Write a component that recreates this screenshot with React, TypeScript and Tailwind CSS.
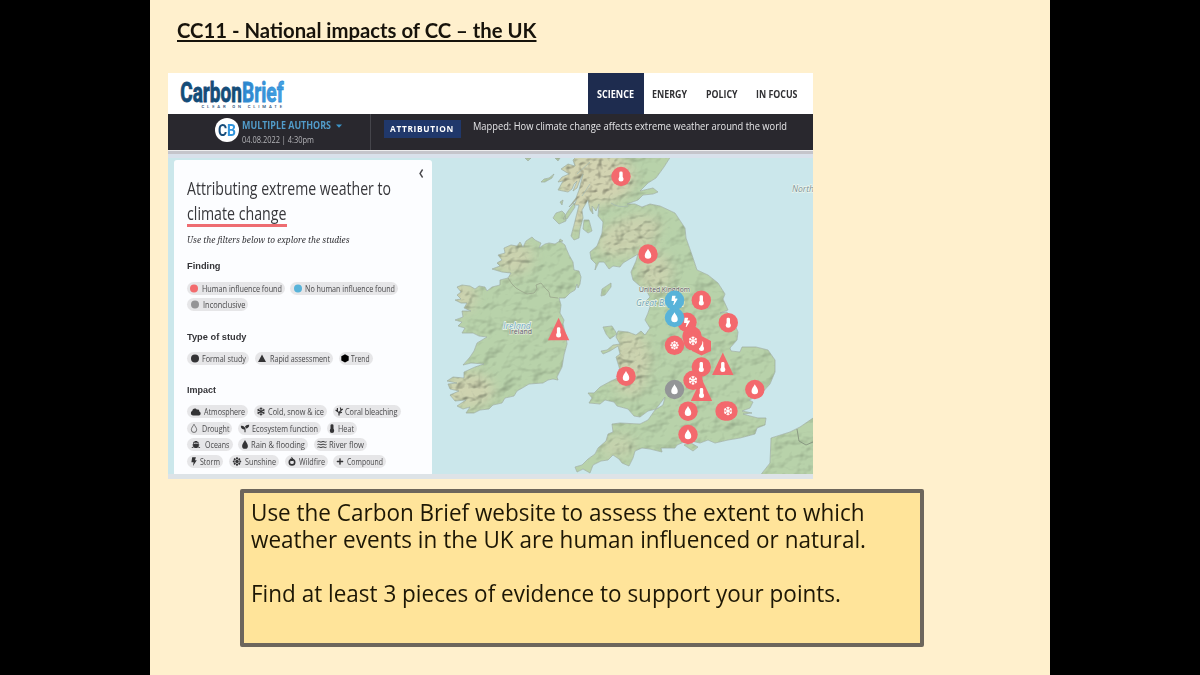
import { ReactNode, useLayoutEffect, useRef } from 'react';
import { FaBolt, FaCloud, FaFire, FaPlus, FaSeedling, FaShip, FaSnowflake, FaSun } from 'react-icons/fa';

interface FitProps {
  width: number;
  className?: string;
  children: ReactNode;
}

// Condenses a single line of text to a set width
function Fit({ width, className = '', children }: FitProps) {
  const ref = useRef<HTMLSpanElement>(null);

  useLayoutEffect(() => {
    const el = ref.current;
    if (!el) return;
    el.style.transform = 'none';
    const natural = el.getBoundingClientRect().width;
    el.style.transform = `scaleX(${width / natural})`;
  }, [width]);

  return (
    <span className="flex shrink-0 whitespace-nowrap" style={{ width }}>
      <span ref={ref} className={`block shrink-0 origin-left ${className}`}>
        {children}
      </span>
    </span>
  );
}

type IconName =
  | 'red' | 'blue' | 'grey' | 'circle' | 'triangle' | 'hexagon'
  | 'cloud' | 'snow' | 'coral' | 'drought' | 'plant' | 'heat'
  | 'ship' | 'drop' | 'river' | 'bolt' | 'sun' | 'fire' | 'plus';

const DROP = 'M0-4.6C1-2.4 2.9-.8 2.9 1.4A2.9 2.9 0 0 1-2.9 1.4C-2.9-.8-1-2.4 0-4.6Z';

function PillIcon({ name }: { name: IconName }) {
  const dots: Partial<Record<IconName, string>> = { red: '#f26b6d', blue: '#58b3d9', grey: '#949496', circle: '#333335' };
  return (
    <svg className="h-[11px] w-[12px] shrink-0 text-[#333335]" viewBox="-6 -5.5 12 11">
      {dots[name] && <circle r="4" fill={dots[name]} />}
      {name === 'triangle' && <path d="M0-4L4 3.6H-4Z" fill="currentColor" />}
      {name === 'hexagon' && <path d="M0-4.2L3.7-2.2V2L0 4L-3.7 2V-2.2Z" fill="#000" />}
      {name === 'cloud' && <FaCloud x={-5.2} y={-4.6} size={10} />}
      {name === 'snow' && <FaSnowflake x={-4.2} y={-4.2} size={8.4} />}
      {name === 'coral' && (
        <path d="M0 4V1L-3.4-1.5M-1.6 0V-3.4M0 1.2L2-1L1.4-4M1.6-1L3.8-2.4M0 1.8L3 .8" stroke="currentColor" strokeWidth="1.2" fill="none" />
      )}
      {name === 'drought' && <path d={DROP} stroke="currentColor" strokeWidth=".7" fill="none" transform="scale(.92)" />}
      {name === 'plant' && <FaSeedling x={-4.4} y={-4.4} size={8.8} />}
      {name === 'heat' && (
        <g fill="currentColor">
          <rect x="-1.5" y="-4.2" width="3" height="7" rx="1.3" />
          <circle cy="2.2" r="2.2" />
        </g>
      )}
      {name === 'ship' && <FaShip x={-4.5} y={-4.4} size={8.8} />}
      {name === 'drop' && <path d={DROP} fill="currentColor" />}
      {name === 'river' && (
        <path d="M-4.5-2.7Q-3.4-3.4-2.2-2.7T0-2.7T2.2-2.7T4.5-2.7M-4.5 0Q-3.4-.7-2.2 0T0 0T2.2 0T4.5 0M-4.5 2.7Q-3.4 2-2.2 2.7T0 2.7T2.2 2.7T4.5 2.7" stroke="currentColor" strokeWidth="1" fill="none" />
      )}
      {name === 'bolt' && <path d="M-1.8-4.2H1.9L1-1.2H2.8L-1 4.5L-.4.8H-2.6Z" fill="currentColor" />}
      {name === 'sun' && <SunGlyph color="#333335" hole="#e6e6e8" />}
      {name === 'fire' && (
        <g>
          <circle cy=".7" r="2.7" fill="none" stroke="currentColor" strokeWidth="1.6" />
          <FaFire x={-2.5} y={-4.7} size={4.5} />
        </g>
      )}
      {name === 'plus' && <FaPlus x={-3.8} y={-3.8} size={7.6} />}
    </svg>
  );
}

function SunGlyph({ color, hole }: { color: string; hole: string }) {
  return (
    <g>
      {[0, 45, 90, 135].map((angle) => (
        <rect key={angle} x="-1" y="-4.2" width="2" height="8.4" rx=".8" fill={color} transform={`rotate(${angle})`} />
      ))}
      <circle r="2.1" fill="none" stroke={hole} strokeWidth=".7" />
    </g>
  );
}

interface PillData {
  label: string;
  icon: IconName;
  width: number;
  text: number;
}

const findings: PillData[][] = [
  [
    { label: 'Human influence found', icon: 'red', width: 97.5, text: 80 },
    { label: 'No human influence found', icon: 'blue', width: 108, text: 90 },
  ],
  [{ label: 'Inconclusive', icon: 'grey', width: 61, text: 42.5 }],
];

const studies: PillData[][] = [
  [
    { label: 'Formal study', icon: 'circle', width: 62, text: 44 },
    { label: 'Rapid assessment', icon: 'triangle', width: 78, text: 60 },
    { label: 'Trend', icon: 'hexagon', width: 34, text: 18.5 },
  ],
];

const impacts: PillData[][] = [
  [
    { label: 'Atmosphere', icon: 'cloud', width: 61, text: 41 },
    { label: 'Cold, snow & ice', icon: 'snow', width: 73, text: 56 },
    { label: 'Coral bleaching', icon: 'coral', width: 68, text: 52.5 },
  ],
  [
    { label: 'Drought', icon: 'drought', width: 45, text: 27.5 },
    { label: 'Ecosystem function', icon: 'plant', width: 83, text: 66 },
    { label: 'Heat', icon: 'heat', width: 30, text: 16 },
  ],
  [
    { label: 'Oceans', icon: 'ship', width: 45.5, text: 24.5 },
    { label: 'Rain & flooding', icon: 'drop', width: 70, text: 54 },
    { label: 'River flow', icon: 'river', width: 53, text: 35 },
  ],
  [
    { label: 'Storm', icon: 'bolt', width: 36, text: 20 },
    { label: 'Sunshine', icon: 'sun', width: 50, text: 31 },
    { label: 'Wildfire', icon: 'fire', width: 43, text: 26 },
    { label: 'Compound', icon: 'plus', width: 53, text: 36 },
  ],
];

function PillRows({ rows }: { rows: PillData[][] }) {
  return (
    <div className="flex flex-col gap-[3.7px]">
      {rows.map((row, index) => (
        <div key={index} className="flex gap-[5.8px]">
          {row.map((pill) => (
            <div key={pill.label} className="flex h-[13px] shrink-0 items-center rounded-full bg-[#e6e6e8] pr-[3px]" style={{ width: pill.width }}>
              <div className="flex min-w-0 flex-1 justify-center">
                <PillIcon name={pill.icon} />
              </div>
              <Fit width={pill.text} className="font-['Open_Sans'] text-[8.5px] leading-[13px] text-[#48484a]">
                {pill.label}
              </Fit>
            </div>
          ))}
        </div>
      ))}
    </div>
  );
}

interface Marker {
  x: number;
  y: number;
  glyph?: 'heat' | 'drop' | 'bolt' | 'snow' | 'sun';
  shape?: 'circle' | 'triangle' | 'hexagon';
  color?: string;
}

const markers: Marker[] = [
  { x: 621, y: 176.5, glyph: 'heat' },
  { x: 648, y: 254, glyph: 'drop' },
  { x: 701.3, y: 300.3, glyph: 'heat' },
  { x: 687, y: 322.3, glyph: 'bolt' },
  { x: 674.5, y: 317.5, glyph: 'drop', color: '#58b3d9' },
  { x: 674.5, y: 300.3, glyph: 'bolt', color: '#58b3d9' },
  { x: 728.3, y: 322.7, glyph: 'heat' },
  { x: 674.5, y: 345.3, glyph: 'sun' },
  { x: 701.5, y: 346, glyph: 'heat', shape: 'hexagon' },
  { x: 692, y: 336 },
  { x: 693, y: 340.8, glyph: 'snow' },
  { x: 701.3, y: 367, glyph: 'heat' },
  { x: 722.8, y: 367, glyph: 'heat', shape: 'triangle' },
  { x: 701.5, y: 393, glyph: 'heat', shape: 'triangle' },
  { x: 693, y: 380.3, glyph: 'snow' },
  { x: 626, y: 376.2, glyph: 'drop' },
  { x: 674.5, y: 389.5, glyph: 'drop', color: '#939597' },
  { x: 754.8, y: 389.5, glyph: 'drop' },
  { x: 688, y: 411.2, glyph: 'drop' },
  { x: 725, y: 411 },
  { x: 728, y: 411, glyph: 'snow' },
  { x: 688, y: 434.5, glyph: 'drop' },
  { x: 558.6, y: 332.3, glyph: 'heat', shape: 'triangle' },
];

function MapMarker({ x, y, glyph, shape = 'circle', color = '#f3696d' }: Marker) {
  return (
    <g transform={`translate(${x} ${y})`} color="#fff">
      {shape === 'circle' && <circle r="9.7" fill={color} />}
      {shape === 'triangle' && <path d="M0-14.5L10.7 8H-10.7Z" fill={color} />}
      {shape === 'hexagon' && <path d="M0-10L9.5-5V5L0 9.5L-9.5 5V-5Z" fill={color} />}
      {glyph === 'heat' && (
        <g fill="#fff">
          <rect x="-1.7" y="-5" width="3.4" height="8.5" rx="1.4" />
          <circle cy="2.6" r="2.5" />
        </g>
      )}
      {glyph === 'drop' && <path d={DROP} fill="#fff" transform="scale(1.12)" />}
      {glyph === 'bolt' && <FaBolt x={-4.8} y={-4.8} size={9.6} />}
      {glyph === 'snow' && <FaSnowflake x={-4.6} y={-4.6} size={9.2} />}
      {glyph === 'sun' && <SunGlyph color="#fff" hole="#f3696d" />}
    </g>
  );
}

const IRELAND =
  'M532 237L535 240L541 243L539 248L545 244L549 243L555 244L560 241L565 245L566 248L569 255L573 262L574 270L579 271L581 277L580 284L578 288L577 284L575 290L570 293L565 298L559 298L561 305L560 313L564 320L563 324L566 336L567 344L564 355L562 367L557 377L558 380L553 379L548 380L543 383L529 384L524 387L517 391L514 396L505 398L502 403L493 405L489 409L480 410L474 413L466 413L470 407L463 409L457 406L466 400L455 401L450 395L459 391L450 389L448 384L457 383L447 381L453 377L464 378L464 372L475 367L484 364L471 363L463 365L470 357L474 351L477 343L487 337L479 336L473 333L462 333L465 328L458 326L462 322L455 320L463 317L462 311L471 311L464 308L467 303L461 303L455 300L461 299L457 295L461 292L457 287L462 285L470 286L475 289L479 286L485 287L487 291L492 287L500 285L500 280L508 278L511 273L502 272L492 269L500 266L497 263L502 260L498 255L505 253L504 248L511 245L517 246L520 242L523 247L526 241Z';

const BRITAIN =
  'M577 156L573 160L575 166L568 164L561 169L569 174L562 177L558 182L563 181L558 190L568 192L572 189L574 184L577 181L573 191L577 188L580 180L583 174L579 190L576 198L569 207L577 199L574 205L579 205L577 213L574 225L571 236L574 240L579 238L580 229L583 218L582 210L585 205L588 200L590 210L593 214L592 206L596 211L599 204L598 216L603 222L602 233L597 246L590 252L591 259L596 264L595 270L599 262L604 262L609 269L613 266L620 267L623 263L633 257L638 254L636 261L631 272L633 280L640 286L646 290L650 297L646 301L650 307L648 313L645 320L650 328L645 335L641 331L636 335L628 332L618 331L616 337L620 344L613 345L607 350L601 351L603 354L610 351L618 346L620 354L616 357L620 370L620 377L611 381L600 387L594 393L588 393L592 398L589 403L600 404L605 400L614 402L617 406L628 409L634 416L640 417L648 411L656 409L665 397L663 405L655 410L648 420L640 424L620 423L612 424L613 432L608 434L606 441L598 448L595 454L588 459L582 465L575 467L577 472L583 469L590 473L593 465L601 461L608 460L613 455L619 459L622 463L629 466L633 458L635 451L642 448L650 449L662 452L661 448L675 448L677 445L684 442L691 441L700 443L708 440L715 443L728 440L740 438L755 434L757 428L765 425L766 418L758 418L750 416L743 414L752 413L742 411L750 408L753 402L749 400L760 395L770 384L775 372L775 360L768 350L756 347L742 347L740 352L731 351L730 348L737 340L738 332L735 325L727 312L720 313L728 310L723 299L725 294L718 283L708 275L697 270L692 255L686 238L685 228L675 213L660 206L650 204L642 207L635 204L627 204L638 200L643 195L653 194L658 192L653 188L640 191L648 183L656 178L664 167L671 156Z';

const ISLANDS = [
  'M601 296L602 289L611 283L611 287L605 295Z',
  'M584 220L589 220L592 231L588 233L583 229Z',
  'M556 213L562 211L565 214L566 221L559 224L553 218Z',
  'M563 219L568 211L574 203L575 207L567 219Z',
  'M541 182L544 179L549 178L554 174L552 178L545 182Z',
  'M560 202L563 200L562 205Z',
  'M525 158H531L528 161Z',
  'M603 327L612 326L617 334L610 339L606 334Z',
  'M684 445L691 443L698 447L693 451Z',
  'M560 239L563 241L559 242Z',
  'M555 158H560L558 161Z',
];

function MapArea() {
  return (
    <svg className="absolute inset-0 h-full w-full" viewBox="168 158 645 316" preserveAspectRatio="none">
      <defs>
        <filter id="lowRelief" x="0" y="0" width="100%" height="100%" colorInterpolationFilters="sRGB">
          <feTurbulence type="fractalNoise" baseFrequency="0.055 0.07" numOctaves="3" seed="8" result="noise" />
          <feDiffuseLighting in="noise" surfaceScale="1.5" diffuseConstant="1.1" lightingColor="#ffffff" result="light">
            <feDistantLight azimuth="225" elevation="65" />
          </feDiffuseLighting>
          <feBlend in="SourceGraphic" in2="light" mode="multiply" result="shaded" />
          <feComposite in="shaded" in2="SourceGraphic" operator="in" />
        </filter>
        <filter id="highRelief" x="0" y="0" width="100%" height="100%" colorInterpolationFilters="sRGB">
          <feTurbulence type="fractalNoise" baseFrequency="0.1 0.13" numOctaves="2" seed="21" result="noise" />
          <feDiffuseLighting in="noise" surfaceScale="2.6" diffuseConstant="1.1" lightingColor="#ffffff" result="light">
            <feDistantLight azimuth="225" elevation="66" />
          </feDiffuseLighting>
          <feBlend in="SourceGraphic" in2="light" mode="multiply" result="shaded" />
          <feComposite in="shaded" in2="SourceGraphic" operator="in" />
        </filter>
        <filter id="soft" x="-40%" y="-40%" width="180%" height="180%">
          <feGaussianBlur stdDeviation="6" />
        </filter>
        <mask id="uplands" maskUnits="userSpaceOnUse" x="432" y="158" width="381" height="316">
          <g filter="url(#soft)" fill="#fff">
            <ellipse cx="594" cy="178" rx="40" ry="27" />
            <ellipse cx="572" cy="210" rx="16" ry="20" />
            <ellipse cx="628" cy="236" rx="34" ry="18" transform="rotate(-20 628 236)" opacity=".75" />
            <ellipse cx="655" cy="272" rx="17" ry="20" opacity=".7" />
            <ellipse cx="630" cy="362" rx="20" ry="34" opacity=".75" />
            <ellipse cx="513" cy="258" rx="20" ry="17" opacity=".75" />
            <ellipse cx="463" cy="296" rx="13" ry="16" opacity=".8" />
            <ellipse cx="468" cy="390" rx="26" ry="18" opacity=".85" />
            <ellipse cx="618" cy="446" rx="18" ry="12" opacity=".5" />
          </g>
        </mask>
      </defs>
      <rect x="168" y="158" width="645" height="316" fill="#cbe7eb" />
      <g filter="url(#lowRelief)" fill="#b8d2aa">
        <path d={BRITAIN} />
        <path d={IRELAND} />
        {ISLANDS.map((d) => (
          <path key={d} d={d} />
        ))}
        <path d="M759 477L770 463L771 438L790 432L800 427L816 416V477Z" />
      </g>
      <g mask="url(#uplands)">
        <g filter="url(#highRelief)" fill="#d2d3b1">
          <path d={BRITAIN} />
          <path d={IRELAND} />
        </g>
      </g>
      <g fill="none" stroke="#9bab9c" strokeWidth=".7" strokeLinejoin="round">
        <path d={BRITAIN} />
        <path d={IRELAND} />
        {ISLANDS.map((d) => (
          <path key={d} d={d} />
        ))}
        <path d="M759 477L770 463L771 438L790 432L800 427L816 416V477Z" />
      </g>
      <g fill="none" stroke="#99a48c" strokeWidth=".8" strokeLinejoin="round">
        <path d="M508 278L512 284L516 288L521 291L527 294L534 293L537 289L536 285L541 283L545 288L549 292L550 297L558 298" />
        <path d="M797 429L799 441L806 445L813 442" stroke="#7f8c79" />
        <path d="M628 206Q618 208 611 203M577 174L590 162M582 196L590 184" stroke="#a7bab0" />
      </g>
      <g fontFamily="Open Sans, sans-serif" fontStyle="italic" stroke="#eef6ec" strokeWidth="1.4" paintOrder="stroke">
        <text x="792" y="192" fontSize="9.5" fill="#7b929b" textLength="22" lengthAdjust="spacingAndGlyphs">North</text>
        <text x="636" y="305.5" fontSize="9.5" fill="#6b9fb4" textLength="48" lengthAdjust="spacingAndGlyphs">Great Britain</text>
        <text x="503" y="329" fontSize="9.5" fill="#6ea8c2" textLength="28" lengthAdjust="spacingAndGlyphs">Ireland</text>
      </g>
      <g fontFamily="Open Sans, sans-serif" fontSize="7.5" fill="#5b5664" stroke="#e9efe0" strokeWidth="1" paintOrder="stroke">
        <text x="639" y="291.5" textLength="51" lengthAdjust="spacingAndGlyphs">United Kingdom</text>
        <text x="509" y="334" textLength="23" lengthAdjust="spacingAndGlyphs">Ireland</text>
      </g>
      {markers.map((marker, index) => (
        <MapMarker key={index} {...marker} />
      ))}
    </svg>
  );
}

function SiteHeader() {
  const links = [
    { label: 'ENERGY', width: 35, box: 'w-[53.5px]' },
    { label: 'POLICY', width: 31.5, box: 'w-[50.5px]' },
    { label: 'IN FOCUS', width: 41.5, box: 'w-[57px]' },
  ];
  return (
    <div className="flex h-[41px] bg-white">
      <div className="flex-1 pl-3">
        <svg className="h-[41px] w-[110px]" viewBox="180 73 110 41" fontFamily="Roboto, sans-serif" fontWeight="700">
          <defs>
            <linearGradient id="brief" x1="0" x2="1">
              <stop offset="0" stopColor="#2c82c9" />
              <stop offset="1" stopColor="#45a6e8" />
            </linearGradient>
          </defs>
          <text x="180.3" y="101.6" fontSize="27" fill="#144c78" stroke="#144c78" strokeWidth=".8" textLength="61.5" lengthAdjust="spacingAndGlyphs">Carbon</text>
          <text x="242" y="101.6" fontSize="27" fill="url(#brief)" stroke="#348ed4" strokeWidth=".8" textLength="41.5" lengthAdjust="spacingAndGlyphs">Brief</text>
          <text x="201.5" y="108.4" fontSize="4.2" fill="#174a72" fontWeight="500" textLength="80.5">CLEAR ON CLIMATE</text>
        </svg>
      </div>
      <div className="flex w-14 items-center bg-[#1e2c4f] pl-[9px] pt-px">
        <Fit width={37} className="font-['Open_Sans'] text-[10px] font-bold text-white">SCIENCE</Fit>
      </div>
      <div className="flex items-center pl-[8.5px] pt-px">
        {links.map((link) => (
          <div key={link.label} className={link.box}>
            <Fit width={link.width} className="font-['Open_Sans'] text-[10px] font-bold text-[#303033]">{link.label}</Fit>
          </div>
        ))}
      </div>
    </div>
  );
}

function ArticleBar() {
  return (
    <div className="flex h-9 bg-[#29282e] font-['Open_Sans']">
      <div className="flex w-[203px] border-r border-[#45454b] pl-[47px] pt-1">
        <div className="flex h-6 w-6 items-center justify-center rounded-full bg-white">
          <Fit width={18} className="font-['Roboto'] text-[17px] font-bold leading-6 text-[#174c79]">
            C<span className="text-[#3295dc]">B</span>
          </Fit>
        </div>
        <div className="pl-[3px]">
          <div className="flex h-[15px] items-center gap-[5px]">
            <Fit width={89} className="text-[10px] font-bold leading-[15px] text-[#519bc9]">MULTIPLE AUTHORS</Fit>
            <svg className="h-[4px] w-[6px]" viewBox="0 0 6 4">
              <path d="M0 .5H6L3 3.8Z" fill="#3b94c8" />
            </svg>
          </div>
          <Fit width={72} className="text-[9px] leading-[13px] text-[#b4b4b8]">04.08.2022 | 4:30pm</Fit>
        </div>
      </div>
      <div className="pl-[13px] pt-[6px]">
        <div className="flex h-[18px] w-[77px] items-center bg-[#20386b] pl-[6px]">
          <Fit width={64} className="text-[9.5px] font-bold leading-[18px] tracking-[0.8px] text-white">ATTRIBUTION</Fit>
        </div>
      </div>
      <div className="pl-3 pt-[4px]">
        <Fit width={314} className="text-[10px] leading-4 text-[#e6e6e8]">
          Mapped: How climate change affects extreme weather around the world
        </Fit>
      </div>
    </div>
  );
}

function FilterPanel() {
  const sectionTitle = "font-['Liberation_Sans'] text-[9.5px] font-bold leading-3 text-[#343438]";
  const heading = "font-['Open_Sans'] text-[18px] leading-[26px] text-[#37373b]";
  return (
    <div className="relative h-[314px] w-[258px] rounded-t-[3px] bg-[#fcfdff] pl-[13px] pt-[15px]">
      <svg className="absolute right-2 top-[9px] h-[9px] w-[6px]" viewBox="0 0 6 9">
        <path d="M4.6.5L2 4.5L4.6 8.5" fill="none" stroke="#4a4a4e" strokeWidth="1.4" />
      </svg>
      <div className="h-[25px]">
        <Fit width={204} className={heading}>Attributing extreme weather to</Fit>
      </div>
      <div className="h-[27px] w-[100px] border-b-[3px] border-[#ee6c71]">
        <Fit width={99.5} className={heading}>climate change</Fit>
      </div>
      <div className="pt-[7px]">
        <Fit width={162.5} className="font-['Noto_Serif','Liberation_Serif'] text-[9.5px] italic leading-3 text-[#333337]">
          Use the filters below to explore the studies
        </Fit>
      </div>
      <div className="pt-[14px]">
        <Fit width={33.5} className={sectionTitle}>Finding</Fit>
      </div>
      <div className="pt-[9.6px]">
        <PillRows rows={findings} />
      </div>
      <div className="pt-[20px]">
        <Fit width={59.5} className={sectionTitle}>Type of study</Fit>
      </div>
      <div className="pt-[8.8px]">
        <PillRows rows={studies} />
      </div>
      <div className="pt-[19px]">
        <Fit width={29} className={sectionTitle}>Impact</Fit>
      </div>
      <div className="pt-[9px]">
        <PillRows rows={impacts} />
      </div>
    </div>
  );
}

export default function App() {
  const body = "font-['Open_Sans'] text-[23px] leading-[27px] text-[#1d1705]";
  return (
    <div className="flex h-[675px] w-[1200px] justify-center overflow-hidden bg-black">
      <main className="w-[900px] bg-[#fff0cd]">
        <h1 className="h-[73px] pl-[27px] pt-[18px]">
          <Fit
            width={359.5}
            className="font-['Lato'] text-[20.5px] font-bold leading-[25px] text-[#17130b] underline decoration-[1.5px] underline-offset-[2px] [text-decoration-skip-ink:none]"
          >
            CC11 - National impacts of CC – the UK
          </Fit>
        </h1>

        {/* Website capture */}
        <section className="ml-[18px] flex h-[406px] w-[645px] flex-col">
          <SiteHeader />
          <ArticleBar />
          <div className="h-[8px] border-t-[1px] border-[#ededee] bg-[#d9e1eb]">
            <div className="h-[3px] bg-[#c5c5cb]" />
          </div>
          <div className="relative h-[316px] overflow-hidden">
            <MapArea />
            <div className="pl-[6px] pt-[2px]">
              <FilterPanel />
            </div>
          </div>
          <div className="h-[5px] bg-[#dde3e7]" />
        </section>

        {/* Task box */}
        <section className="ml-[90px] mt-[10px] h-[158px] w-[684px] rounded-[2px] border-4 border-[#6d665c] bg-[#ffe49a] pl-[6.5px] pt-[6px]">
          <Fit width={613.5} className={body}>Use the Carbon Brief website to assess the extent to which</Fit>
          <Fit width={615} className={body}>weather events in the UK are human influenced or natural.</Fit>
          <div className="h-[27px]" />
          <Fit width={590} className={body}>Find at least 3 pieces of evidence to support your points.</Fit>
        </section>
      </main>
    </div>
  );
}
